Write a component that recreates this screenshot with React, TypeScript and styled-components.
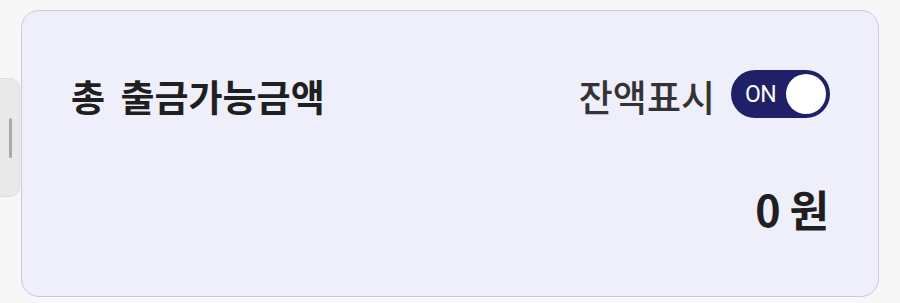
import React, { useState } from "react";
import styled, { createGlobalStyle } from "styled-components";

const Global = createGlobalStyle`
  html, body { margin: 0; padding: 0; background: #f7f7f8; }
  body { font-family: "Noto Sans CJK KR", "Noto Sans", sans-serif; }
`;

const Page = styled.div`
  position: relative;
  width: 900px;
  height: 303px;
  box-sizing: border-box;
  padding: 10px 21px 6px 21px;
  display: flex;
`;

const SideTab = styled.div`
  position: absolute;
  left: -10px;
  top: 78px;
  width: 30px;
  height: 119px;
  background: #e9e9e9;
  border: 1px solid #dedede;
  border-radius: 0 10px 10px 0;
  box-sizing: border-box;
  display: flex;
  align-items: center;
  justify-content: flex-start;
  padding-left: 18px;
`;

const Grip = styled.div`
  width: 3px;
  height: 40px;
  background: #a9a9a9;
  border-radius: 2px;
`;

const Card = styled.div`
  flex: 1;
  background: #efeefb;
  border: 1.5px solid #cac8dd;
  border-radius: 18px;
  box-sizing: border-box;
  padding: 57px 48px 0 48px;
  display: flex;
  flex-direction: column;
  position: relative;
  z-index: 1;
`;

const Row = styled.div`
  display: flex;
  align-items: center;
  justify-content: space-between;
  height: 52px;
`;

const Title = styled.div`
  font-size: 37px;
  line-height: 37px;
  font-weight: 700;
  color: #1f1f1f;
  word-spacing: 7px;
  margin-top: 5px;
  padding-left: 1px;
`;

const ToggleGroup = styled.div`
  display: flex;
  align-items: center;
  gap: 16px;
`;

const ToggleLabel = styled.span`
  font-size: 37px;
  line-height: 37px;
  font-weight: 500;
  color: #333333;
  margin-top: 4px;
`;

const Switch = styled.button<{ $on: boolean }>`
  width: 99px;
  height: 48px;
  border: none;
  border-radius: 24px;
  background: ${(p) => (p.$on ? "#1f2068" : "#b8b8c4")};
  padding: 0 4px 0 14px;
  display: flex;
  align-items: center;
  justify-content: space-between;
  cursor: pointer;
  box-sizing: border-box;
`;

const SwitchText = styled.span`
  color: #ffffff;
  font-family: "Roboto", "Noto Sans", sans-serif;
  font-size: 23px;
  font-weight: 400;
  letter-spacing: -0.5px;
`;

const Knob = styled.span`
  width: 40px;
  height: 40px;
  border-radius: 50%;
  background: #ffffff;
`;

const Amount = styled.div`
  margin-top: 67px;
  align-self: flex-end;
  font-size: 43px;
  line-height: 43px;
  font-weight: 700;
  color: #1f1f1f;
  word-spacing: -1px;
  margin-right: 1px;
`;

export default function App() {
  const [on, setOn] = useState(true);
  return (
    <>
      <Global />
      <Page>
        <SideTab>
          <Grip />
        </SideTab>
        <Card>
          <Row>
            <Title>총 출금가능금액</Title>
            <ToggleGroup>
              <ToggleLabel>잔액표시</ToggleLabel>
              <Switch $on={on} onClick={() => setOn(!on)}>
                <SwitchText>{on ? "ON" : "OFF"}</SwitchText>
                <Knob />
              </Switch>
            </ToggleGroup>
          </Row>
          <Amount>0 원</Amount>
        </Card>
      </Page>
    </>
  );
}
